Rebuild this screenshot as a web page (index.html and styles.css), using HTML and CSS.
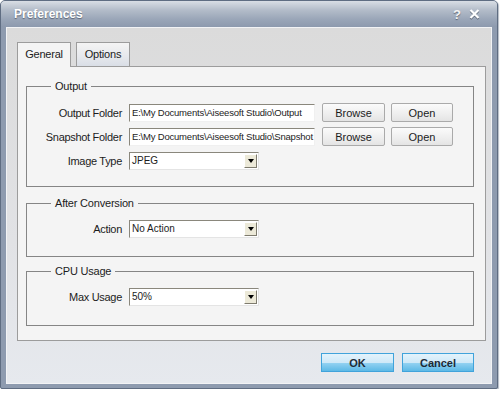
FILE: index.html
```html
<!DOCTYPE html>
<html lang="en">
<head>
  <meta charset="UTF-8" />
  <title>Preferences</title>
  <link rel="stylesheet" href="styles.css">
</head>
<body>
  <div class="window">
    <div class="titlebar">
      <span class="title">Preferences</span>
      <span class="title-buttons">
        <span class="help">?</span>
        <svg class="close" width="11" height="10" viewBox="0 0 11 10">
          <path d="M1.5 1 L9.5 9 M9.5 1 L1.5 9" stroke="#fff" stroke-width="2.2" fill="none"/>
        </svg>
      </span>
    </div>

    <div class="client">
      <div class="tabs">
        <div class="tab active">General</div>
        <div class="tab">Options</div>
      </div>

      <div class="panel">
        <fieldset class="group group-output">
          <legend>Output</legend>
          <div class="group-body">
            <div class="row">
              <label>Output Folder</label>
              <div class="textbox">E:\My Documents\Aiseesoft Studio\Output</div>
              <button class="btn">Browse</button>
              <button class="btn btn-open">Open</button>
            </div>
            <div class="row">
              <label>Snapshot Folder</label>
              <div class="textbox">E:\My Documents\Aiseesoft Studio\Snapshot</div>
              <button class="btn">Browse</button>
              <button class="btn btn-open">Open</button>
            </div>
            <div class="row">
              <label>Image Type</label>
              <div class="combo"><span>JPEG</span><i class="arrow"></i></div>
            </div>
          </div>
        </fieldset>

        <fieldset class="group group-after">
          <legend>After Conversion</legend>
          <div class="group-body">
            <div class="row">
              <label>Action</label>
              <div class="combo"><span>No Action</span><i class="arrow"></i></div>
            </div>
          </div>
        </fieldset>

        <fieldset class="group group-cpu">
          <legend>CPU Usage</legend>
          <div class="group-body">
            <div class="row">
              <label>Max Usage</label>
              <div class="combo"><span>50%</span><i class="arrow"></i></div>
            </div>
          </div>
        </fieldset>
      </div>

      <div class="footer">
        <button class="btn-blue btn-ok">OK</button>
        <button class="btn-blue btn-cancel">Cancel</button>
      </div>
    </div>
  </div>
</body>
</html>
```

FILE: styles.css
```css
body {
  margin: 0;
  background: #fff;
  font-family: "Liberation Sans", Arial, sans-serif;
  font-size: 11px;
  color: #1c1c1c;
}

.window {
  width: 498px;
  box-sizing: border-box;
  border: 1px solid #5f6d82;
  border-radius: 5px 5px 2px 2px;
  background: #8e9baf;
  padding: 0 5px 4px;
  box-shadow: 1px 1px 1px #b5bcc6;
}

.titlebar {
  height: 26px;
  margin: 0 -5px;
  padding: 0 17px 0 13px;
  display: flex;
  align-items: center;
  justify-content: space-between;
  background: linear-gradient(#d9dee5, #b3bcc9 35%, #9aa6b8 70%, #8d9aae);
  border-radius: 4px 4px 0 0;
  color: #fff;
  font-weight: bold;
  font-size: 12px;
  text-shadow: 0 1px 1px #5a6474;
}

.title-buttons {
  display: flex;
  align-items: center;
  gap: 8px;
}

.help {
  font-size: 13px;
  color: #f4f4f4;
}

.close {
  filter: drop-shadow(0 1px 0 #5a6474);
}

.client {
  height: 357px;
  box-sizing: border-box;
  background: linear-gradient(#dbdbdb, #e1e2e5 60%, #e6e9ee);
  border: 1px solid #f2f3f5;
  padding: 14px 5px 0 10px;
  display: flex;
  flex-direction: column;
}

.tabs {
  display: flex;
  align-items: flex-start;
  gap: 5px;
}

.tab {
  width: 54px;
  height: 24px;
  box-sizing: border-box;
  border: 1px solid #9c9c9c;
  border-bottom: none;
  text-align: center;
  line-height: 23px;
  letter-spacing: -0.2px;
  background: linear-gradient(#f4f4f4, #e6e8ec 60%, #d9dee6);
}

.tab.active {
  height: 25px;
  margin-bottom: -1px;
  background: #f4f4f4;
  position: relative;
  z-index: 1;
}

.panel {
  height: 275px;
  box-sizing: border-box;
  border: 1px solid #9c9c9c;
  background: #f4f4f4;
  padding: 12px 11px 0 8px;
}

.group {
  margin: 0;
  padding: 0;
  border: 1px solid #858585;
  min-width: 0;
}

.group legend {
  margin-left: 24px;
  padding: 0 4px;
  line-height: 14px;
  letter-spacing: -0.2px;
}

.group-body {
  display: flex;
  flex-direction: column;
  gap: 5px;
  padding: 10px 0 16px;
}

.group-after {
  margin-top: 9px;
}

.group-after .group-body {
  padding: 9px 0 18px;
}

.group-cpu {
  margin-top: 7px;
}

.group-cpu .group-body {
  padding: 9px 0 19px;
}

.row {
  display: flex;
  align-items: center;
  gap: 7px;
  height: 19px;
}

.row label {
  width: 95px;
  text-align: right;
  letter-spacing: -0.3px;
}

.textbox {
  width: 186px;
  height: 18px;
  box-sizing: border-box;
  background: #fff;
  border-top: 1px solid #8a877c;
  border-left: 1px solid #8a877c;
  border-right: 1px solid #f0f0f0;
  border-bottom: 1px solid #f0f0f0;
  padding-left: 2px;
  font-size: 9.5px;
  line-height: 16px;
  letter-spacing: -0.2px;
  white-space: nowrap;
  overflow: hidden;
}

.btn {
  width: 63px;
  height: 19px;
  padding: 0;
  border: 1px solid #aaa;
  border-radius: 2px;
  background: linear-gradient(#fbfbfb, #f0f0f0 50%, #e4e4e4);
  font-family: inherit;
  font-size: 11px;
  color: #1c1c1c;
}

.btn-open {
  width: 62px;
  margin-left: -1px;
}

.combo {
  width: 130px;
  height: 18px;
  box-sizing: border-box;
  display: flex;
  align-items: center;
  justify-content: space-between;
  background: #fff;
  border-top: 1px solid #8a877c;
  border-left: 1px solid #8a877c;
  border-right: 1px solid #e4e4e4;
  border-bottom: 1px solid #e4e4e4;
  padding: 0 1px 0 2px;
  font-size: 10px;
}

.arrow {
  width: 13px;
  height: 14px;
  box-sizing: border-box;
  display: flex;
  align-items: center;
  justify-content: center;
  background: #ece9d8;
  border-top: 1px solid #fff;
  border-left: 1px solid #fff;
  border-right: 1px solid #7e7b6e;
  border-bottom: 1px solid #7e7b6e;
}

.arrow::after {
  content: "";
  border-left: 3px solid transparent;
  border-right: 3px solid transparent;
  border-top: 4px solid #000;
}

.footer {
  display: flex;
  justify-content: flex-end;
  gap: 8px;
  padding: 12px 12px 0 0;
}

.btn-blue {
  height: 19px;
  padding: 0;
  border: 1px solid #41a3db;
  background: linear-gradient(#e4f3fc, #cfe9f8 50%, #8fd0f1 56%, #5db9e6);
  font-family: inherit;
  font-size: 11px;
  font-weight: bold;
  color: #1d2a36;
}

.btn-ok {
  width: 73px;
}

.btn-cancel {
  width: 72px;
}
```
